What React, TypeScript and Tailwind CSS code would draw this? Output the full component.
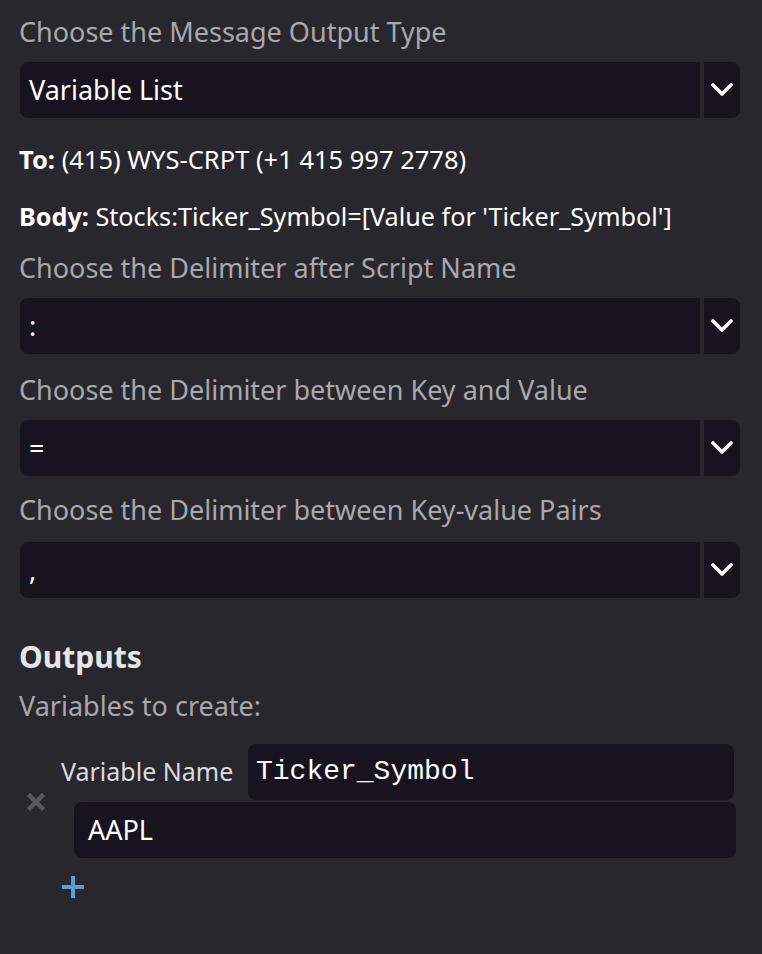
const font = { fontFamily: '"Noto Sans", "Open Sans", sans-serif' };

const Chevron = () => (
  <svg width="22" height="14" viewBox="0 0 22 14">
    <path d="M2 2 L11 11 L20 2" fill="none" stroke="#ffffff" strokeWidth="3.6" strokeLinecap="round" strokeLinejoin="round" />
  </svg>
);

const SelectBox = ({ value }: { value: string }) => (
  <div className="flex h-14 w-[720px] gap-1">
    <div className="flex flex-1 items-center rounded-l-lg bg-[#17141f] pl-[9px] text-[27px] text-white">
      {value}
    </div>
    <div className="flex w-9 items-center justify-center rounded-r-lg bg-[#17141f]">
      <Chevron />
    </div>
  </div>
);

const Label = ({ text }: { text: string }) => (
  <div className="text-[27px] leading-[30px] text-[#a9a8ac]">{text}</div>
);

export default function App() {
  return (
    <div className="min-h-[954px] w-[762px] bg-[#28272d] pl-[19px] pt-[17px]" style={font}>
      <Label text="Choose the Message Output Type" />
      <div className="mt-[15px] ml-px">
        <SelectBox value="Variable List" />
      </div>

      <div className="mt-[27px] text-[25.5px] leading-[28px] text-white">
        <span className="font-bold">To:</span> (415) WYS-CRPT (+1 415 997 2778)
      </div>
      <div className="mt-[29px] text-[25.2px] leading-[28px] text-white">
        <span className="font-bold">Body:</span> Stocks:Ticker_Symbol=[Value for 'Ticker_Symbol']
      </div>

      <div className="mt-[23px]">
        <Label text="Choose the Delimiter after Script Name" />
      </div>
      <div className="mt-[15px] ml-px">
        <SelectBox value=":" />
      </div>

      <div className="mt-[21px]">
        <Label text="Choose the Delimiter between Key and Value" />
      </div>
      <div className="mt-[15px] ml-px">
        <SelectBox value="=" />
      </div>

      <div className="mt-[19px]">
        <Label text="Choose the Delimiter between Key-value Pairs" />
      </div>
      <div className="mt-[17px] ml-px">
        <SelectBox value="," />
      </div>

      <div className="mt-[42px] text-[30px] font-bold leading-[34px] text-[#e6e6e8]">Outputs</div>
      <div className="mt-[17px]">
        <Label text="Variables to create:" />
      </div>

      <div className="mt-[23px] flex">
        <div className="flex h-[114px] w-[42px] items-center pl-[7px] pt-[2px]">
          <svg width="20" height="20" viewBox="0 0 20 20">
            <path d="M2.5 2.5 L17.5 17.5 M17.5 2.5 L2.5 17.5" stroke="#5a595e" strokeWidth="4.5" />
          </svg>
        </div>
        <div className="flex flex-col">
          <div className="flex items-center">
            <span className="w-[187px] text-[25px] text-[#dcdce0]">Variable Name</span>
            <div
              className="flex h-14 w-[486px] items-center rounded-lg bg-[#17141f] pl-[8px] text-[28px] text-white"
              style={{ fontFamily: '"Liberation Mono", monospace' }}
            >
              Ticker_Symbol
            </div>
          </div>
          <div className="ml-[13px] mt-[2px] flex h-14 w-[662px] items-center rounded-lg bg-[#17141f] pl-[14px] text-[27px] text-white">
            AAPL
          </div>
          <div className="mt-[17px]">
            <svg width="24" height="24" viewBox="0 0 24 24">
              <path d="M12 1 V23 M1 12 H23" stroke="#5a9fd4" strokeWidth="4" />
            </svg>
          </div>
        </div>
      </div>
    </div>
  );
}
